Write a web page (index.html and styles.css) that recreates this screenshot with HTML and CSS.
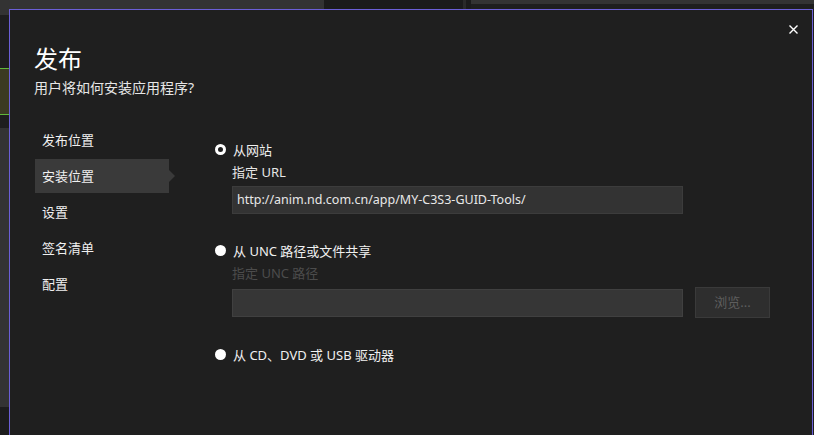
FILE: index.html
```html
<!DOCTYPE html>
<html lang="zh-CN">
<head>
    <meta charset="UTF-8">
    <title>发布</title>
    <link rel="stylesheet" href="styles.css">
</head>
<body>
    <div class="backdrop">
        <div class="top-strip">
            <div class="seg seg-a"></div>
            <div class="seg seg-b"></div>
            <div class="seg seg-c"></div>
            <div class="seg seg-d"></div>
        </div>
        <div class="side-strip">
            <div class="blk blk-1"></div>
            <div class="blk blk-2"></div>
            <div class="blk blk-3"></div>
            <div class="blk blk-4"></div>
            <div class="blk blk-5"></div>
            <div class="blk blk-6"></div>
        </div>
    </div>

    <div class="dialog">
        <button class="close" title="关闭">
            <svg width="9" height="9" viewBox="0 0 9 9">
                <path d="M0.5 0.5 L8.5 8.5 M8.5 0.5 L0.5 8.5" stroke="#fff" stroke-width="1.4" fill="none"/>
            </svg>
        </button>

        <div class="header">
            <h1>发布</h1>
            <p>用户将如何安装应用程序?</p>
        </div>

        <div class="main">
            <ul class="nav">
                <li>发布位置</li>
                <li class="active">安装位置</li>
                <li>设置</li>
                <li>签名清单</li>
                <li>配置</li>
            </ul>

            <div class="content">
                <div class="option">
                    <span class="radio checked"></span>
                    <span>从网站</span>
                </div>
                <div class="sub">
                    <div class="field-label">指定 URL</div>
                    <div class="field-row">
                        <div class="input">http://anim.nd.com.cn/app/MY-C3S3-GUID-Tools/</div>
                    </div>
                </div>

                <div class="option gap">
                    <span class="radio"></span>
                    <span>从 UNC 路径或文件共享</span>
                </div>
                <div class="sub">
                    <div class="field-label disabled">指定 UNC 路径</div>
                    <div class="field-row">
                        <div class="input disabled"></div>
                        <div class="browse">浏览...</div>
                    </div>
                </div>

                <div class="option gap-last">
                    <span class="radio"></span>
                    <span>从 CD、DVD 或 USB 驱动器</span>
                </div>
            </div>
        </div>
    </div>
</body>
</html>
```

FILE: styles.css
```css
* {
    box-sizing: border-box;
}

body {
    margin: 0;
    width: 814px;
    height: 435px;
    overflow: hidden;
    position: relative;
    background: #1e1e1e;
    color: #ffffff;
    font-family: "Noto Sans", "Noto Sans CJK SC", sans-serif;
}

/* ide behind the dialog */
.top-strip {
    display: flex;
    height: 15px;
}

.seg-a {
    width: 324px;
    background: #333333;
}

.seg-b {
    width: 142px;
    background: #1b1b1b;
    border-right: 3px solid #2a2a2a;
}

.seg-c {
    width: 5px;
    background: #1b1b1b;
}

.seg-d {
    flex: 1;
    background: linear-gradient(#333333 0 4px, #1e1e1e 4px);
}

.side-strip {
    width: 9px;
    display: flex;
    flex-direction: column;
}

.blk-1 { height: 53px; background: #1e1e1e; }
.blk-2 { height: 47px; background: #3b3a22; border-top: 1px solid #5fb83a; border-bottom: 1px solid #5fb83a; }
.blk-3 { height: 13px; background: #1e1e1e; }
.blk-4 { height: 279px; background: #333333; }
.blk-5 { height: 28px; background: #1c1c1c; }

/* dialog */
.dialog {
    position: absolute;
    left: 9px;
    top: 9px;
    width: 804px;
    height: 440px;
    background: #1f1f1f;
    border: 1px solid #6b5fd6;
    padding: 0 24px;
}

.close {
    position: absolute;
    right: 14px;
    top: 15px;
    background: none;
    border: none;
    padding: 0;
    width: 9px;
    height: 9px;
    cursor: pointer;
}

.close svg {
    display: block;
}

.header {
    padding-top: 34px;
}

.header h1 {
    margin: 0;
    font-size: 24px;
    font-weight: normal;
    line-height: 30px;
}

.header p {
    margin: 4px 0 0;
    font-size: 14px;
    line-height: 20px;
    color: #e6e6e6;
}

.main {
    display: flex;
    margin-top: 25px;
    margin-left: 1px;
}

.nav {
    list-style: none;
    margin: 0;
    padding: 0;
    width: 180px;
    font-size: 13px;
    flex-shrink: 0;
}

.nav li {
    position: relative;
    width: 134px;
    height: 34px;
    line-height: 34px;
    padding-left: 7px;
    margin-bottom: 2px;
    color: #f0f0f0;
}

.nav li.active {
    background: #3a3a3a;
}

.nav li.active::after {
    content: "";
    position: absolute;
    left: 134px;
    top: 11px;
    border-left: 6px solid #3a3a3a;
    border-top: 6px solid transparent;
    border-bottom: 6px solid transparent;
}

.content {
    padding-top: 16px;
    font-size: 13px;
}

.option {
    display: flex;
    align-items: center;
    height: 20px;
    color: #f0f0f0;
}

.option.gap {
    margin-top: 26px;
}

.option.gap-last {
    margin-top: 26px;
}

.radio {
    width: 11px;
    height: 11px;
    border-radius: 50%;
    background: #ffffff;
    margin-right: 7px;
}

.radio.checked {
    background: #1f1f1f;
    border: 3px solid #ffffff;
}

.sub {
    padding-left: 17px;
}

.field-label {
    margin-top: 4px;
    height: 18px;
    line-height: 18px;
    color: #e6e6e6;
}

.field-label.disabled {
    color: #4c4c4c;
}

.field-row {
    display: flex;
    align-items: center;
    margin-top: 5px;
}

.input {
    width: 451px;
    height: 28px;
    line-height: 26px;
    padding-left: 4px;
    background: #333333;
    border: 1px solid #3c3c3c;
    color: #e8e8e8;
    font-size: 12.5px;
}

.input.disabled {
    background: #363636;
    border-color: #404040;
}

.browse {
    margin-left: 12px;
    width: 75px;
    height: 31px;
    line-height: 29px;
    text-align: center;
    background: #2e2e2e;
    border: 1px solid #3a3a3a;
    color: #5e5e5e;
    font-size: 13px;
}
```
